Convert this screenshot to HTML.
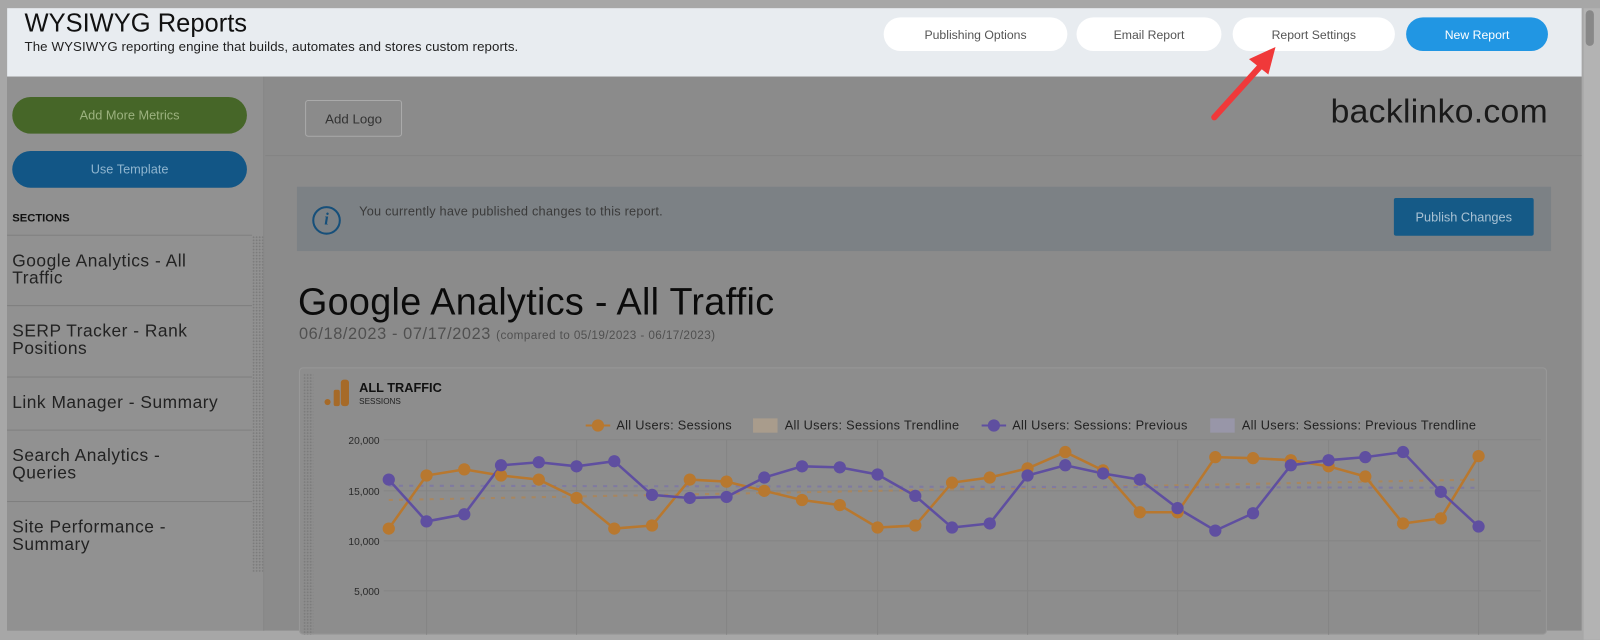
<!DOCTYPE html>
<html><head><meta charset="utf-8"><style>
*{margin:0;padding:0;box-sizing:border-box}
html,body{width:1600px;height:640px;overflow:hidden;background:#a7a7a7;font-family:"Liberation Sans",sans-serif}
#s{position:absolute;left:0;top:0;width:1568px;height:627px;transform:scale(1.020408);transform-origin:0 0}
.a{position:absolute}
.btn{position:absolute;top:17px;height:33px;border-radius:17px;background:#fff;color:#555;font-size:12px;display:flex;align-items:center;justify-content:center}
.sec{position:absolute;left:12px;font-size:17px;color:#222;line-height:17px;letter-spacing:0.5px}
.hr{position:absolute;left:7px;width:240px;height:1px;background:#7f7f7f}
</style></head><body><div id="s">
<div class="a" style="left:7px;top:75px;width:1543px;height:543px;background:#8b8b8b"></div>
<div class="a" style="left:7px;top:75px;width:252px;height:543px;background:#919191;border-right:1px solid #858585"></div>
<div class="a" style="left:1552px;top:8px;width:16px;height:619px;background:#b3b3b3"></div>
<div class="a" style="left:1554px;top:10px;width:8px;height:35px;background:#888;border-radius:4px"></div>
<div class="a" style="left:7px;top:8px;width:1543px;height:67px;background:#e8ecf0"></div>
<div class="a" style="left:24px;top:9px;font-size:25px;color:#111">WYSIWYG Reports</div>
<div class="a" style="left:24px;top:38px;font-size:13px;color:#222;letter-spacing:0.1px">The WYSIWYG reporting engine that builds, automates and stores custom reports.</div>
<div class="btn" style="left:866px;width:180px">Publishing Options</div>
<div class="btn" style="left:1055px;width:142px">Email Report</div>
<div class="btn" style="left:1208px;width:159px">Report Settings</div>
<div class="btn" style="left:1378px;width:139px;background:#2196e3;color:#fff">New Report</div>

<div class="a" style="left:12px;top:95px;width:230px;height:36px;border-radius:18px;background:#466628;color:#9cb27f;font-size:12.5px;display:flex;align-items:center;justify-content:center">Add More Metrics</div>
<div class="a" style="left:12px;top:148px;width:230px;height:36px;border-radius:18px;background:#125686;color:#8fb5cf;font-size:12.5px;display:flex;align-items:center;justify-content:center">Use Template</div>
<div class="a" style="left:12px;top:208px;font-size:11px;font-weight:bold;color:#111">SECTIONS</div>
<div class="hr" style="top:230px"></div><div class="hr" style="top:299px"></div><div class="hr" style="top:369px"></div><div class="hr" style="top:421px"></div><div class="hr" style="top:491px"></div>
<div class="a" style="left:247px;top:231px;width:11px;height:330px;background-image:radial-gradient(#7c7c7c 0.8px,transparent 1px);background-size:3px 3px"></div>
<div class="sec" style="top:247px">Google Analytics - All<br>Traffic</div>
<div class="sec" style="top:316px">SERP Tracker - Rank<br>Positions</div>
<div class="sec" style="top:386px">Link Manager - Summary</div>
<div class="sec" style="top:438px">Search Analytics -<br>Queries</div>
<div class="sec" style="top:508px">Site Performance -<br>Summary</div>

<div class="a" style="left:299px;top:98px;width:95px;height:36px;border:1px solid #aaa;border-radius:3px;color:#333;font-size:13px;display:flex;align-items:center;justify-content:center">Add Logo</div>
<div class="a" style="right:51px;top:90px;font-size:33px;color:#1a1a1a;letter-spacing:0.3px">backlinko.com</div>
<div class="a" style="left:260px;top:152px;width:1290px;height:1px;background:#838383"></div>
<div class="a" style="left:291px;top:183px;width:1229px;height:63px;background:#7c8185"></div>
<div class="a" style="left:306px;top:202px;width:28px;height:28px;border:2px solid #164f7a;border-radius:50%;color:#164f7a;font:italic bold 16px 'Liberation Serif',serif;display:flex;align-items:center;justify-content:center">i</div>
<div class="a" style="left:352px;top:200px;font-size:12.5px;color:#3a3a3a;letter-spacing:0.2px">You currently have published changes to this report.</div>
<div class="a" style="left:1366px;top:194px;width:137px;height:37px;background:#155a87;border-radius:2px;color:#a9c2d4;font-size:12.5px;display:flex;align-items:center;justify-content:center">Publish Changes</div>
<div class="a" style="left:292px;top:275px;font-size:37px;color:#0b0b0b;letter-spacing:0.3px">Google Analytics - All Traffic</div>
<div class="a" style="left:293px;top:319px;font-size:16px;color:#505050;letter-spacing:0.6px">06/18/2023 - 07/17/2023 <span style="font-size:11.5px;letter-spacing:0.4px">(compared to 05/19/2023 - 06/17/2023)</span></div>

<div class="a" style="left:293px;top:360px;width:1223px;height:262px;background:#8d8d8d;border:1px solid #989898;border-radius:4px"></div>
<div class="a" style="left:297px;top:366px;width:10px;height:256px;background-image:radial-gradient(#7c7c7c 0.8px,transparent 1px);background-size:3px 3px"></div>
<svg class="a" style="left:0;top:0" width="1568" height="627">
<rect x="334" y="372" width="8" height="26" rx="3" fill="#a66a28"/><rect x="327" y="382" width="6" height="16" rx="2" fill="#a66a28"/><circle cx="321" cy="394" r="3" fill="#a66a28"/>
<text x="352" y="384" font-family="Liberation Sans" font-weight="bold" font-size="12.5" fill="#111">ALL TRAFFIC</text>
<text x="352" y="396" font-family="Liberation Sans" font-size="8" fill="#222">SESSIONS</text>
<g font-family="Liberation Sans" font-size="12.5" fill="#222" letter-spacing="0.3">
<line x1="574" y1="417" x2="598" y2="417" stroke="#b8782f" stroke-width="2"/><circle cx="586" cy="417" r="6" fill="#b8782f"/><text x="604" y="421">All Users: Sessions</text>
<rect x="738" y="410" width="24" height="14" fill="#a99c8c"/><text x="769" y="421">All Users: Sessions Trendline</text>
<line x1="962" y1="417" x2="986" y2="417" stroke="#5f4fa0" stroke-width="2"/><circle cx="974" cy="417" r="6" fill="#5f4fa0"/><text x="992" y="421">All Users: Sessions: Previous</text>
<rect x="1186" y="410" width="24" height="14" fill="#9896a8"/><text x="1217" y="421">All Users: Sessions: Previous Trendline</text>
</g>
<g font-family="Liberation Sans" font-size="10" fill="#2a2a2a" text-anchor="end">
<text x="372" y="435">20,000</text><text x="372" y="485">15,000</text><text x="372" y="534">10,000</text><text x="372" y="583">5,000</text></g>
<g stroke="#858585" stroke-width="1"><line x1="376" y1="431" x2="1510" y2="431"/><line x1="376" y1="481" x2="1510" y2="481"/><line x1="376" y1="530" x2="1510" y2="530"/><line x1="376" y1="579" x2="1510" y2="579"/>
<line x1="418" y1="431" x2="418" y2="622"/><line x1="565" y1="431" x2="565" y2="622"/><line x1="712" y1="431" x2="712" y2="622"/><line x1="860" y1="431" x2="860" y2="622"/><line x1="1007" y1="431" x2="1007" y2="622"/><line x1="1154" y1="431" x2="1154" y2="622"/><line x1="1302" y1="431" x2="1302" y2="622"/><line x1="1449" y1="431" x2="1449" y2="622"/></g>
<line x1="381" y1="490" x2="1449" y2="470" stroke="#a8865f" stroke-width="2" stroke-dasharray="4 6"/>
<line x1="381" y1="476" x2="1449" y2="478" stroke="#7f7aa0" stroke-width="2" stroke-dasharray="4 6"/>
<polyline fill="none" stroke="#b8782f" stroke-width="2.5" points="381,518 418,466 455,460 491,466 528,470 565,488 602,518 639,515 676,470 712,472 749,481 786,490 823,495 860,517 897,515 933,473 970,468 1007,459 1044,443 1081,461 1117,502 1154,502 1191,448 1228,449 1265,451 1302,457 1338,467 1375,513 1412,508 1449,447"/>
<polyline fill="none" stroke="#5f4fa0" stroke-width="2.5" points="381,470 418,511 455,504 491,456 528,453 565,457 602,452 639,485 676,488 712,487 749,468 786,457 823,458 860,465 897,486 933,517 970,513 1007,466 1044,456 1081,464 1117,470 1154,498 1191,520 1228,503 1265,456 1302,451 1338,448 1375,443 1412,482 1449,516"/>
<g fill="#b8782f"><circle cx="381" cy="518" r="6"/><circle cx="418" cy="466" r="6"/><circle cx="455" cy="460" r="6"/><circle cx="491" cy="466" r="6"/><circle cx="528" cy="470" r="6"/><circle cx="565" cy="488" r="6"/><circle cx="602" cy="518" r="6"/><circle cx="639" cy="515" r="6"/><circle cx="676" cy="470" r="6"/><circle cx="712" cy="472" r="6"/><circle cx="749" cy="481" r="6"/><circle cx="786" cy="490" r="6"/><circle cx="823" cy="495" r="6"/><circle cx="860" cy="517" r="6"/><circle cx="897" cy="515" r="6"/><circle cx="933" cy="473" r="6"/><circle cx="970" cy="468" r="6"/><circle cx="1007" cy="459" r="6"/><circle cx="1044" cy="443" r="6"/><circle cx="1081" cy="461" r="6"/><circle cx="1117" cy="502" r="6"/><circle cx="1154" cy="502" r="6"/><circle cx="1191" cy="448" r="6"/><circle cx="1228" cy="449" r="6"/><circle cx="1265" cy="451" r="6"/><circle cx="1302" cy="457" r="6"/><circle cx="1338" cy="467" r="6"/><circle cx="1375" cy="513" r="6"/><circle cx="1412" cy="508" r="6"/><circle cx="1449" cy="447" r="6"/></g>
<g fill="#5f4fa0"><circle cx="381" cy="470" r="6"/><circle cx="418" cy="511" r="6"/><circle cx="455" cy="504" r="6"/><circle cx="491" cy="456" r="6"/><circle cx="528" cy="453" r="6"/><circle cx="565" cy="457" r="6"/><circle cx="602" cy="452" r="6"/><circle cx="639" cy="485" r="6"/><circle cx="676" cy="488" r="6"/><circle cx="712" cy="487" r="6"/><circle cx="749" cy="468" r="6"/><circle cx="786" cy="457" r="6"/><circle cx="823" cy="458" r="6"/><circle cx="860" cy="465" r="6"/><circle cx="897" cy="486" r="6"/><circle cx="933" cy="517" r="6"/><circle cx="970" cy="513" r="6"/><circle cx="1007" cy="466" r="6"/><circle cx="1044" cy="456" r="6"/><circle cx="1081" cy="464" r="6"/><circle cx="1117" cy="470" r="6"/><circle cx="1154" cy="498" r="6"/><circle cx="1191" cy="520" r="6"/><circle cx="1228" cy="503" r="6"/><circle cx="1265" cy="456" r="6"/><circle cx="1302" cy="451" r="6"/><circle cx="1338" cy="448" r="6"/><circle cx="1375" cy="443" r="6"/><circle cx="1412" cy="482" r="6"/><circle cx="1449" cy="516" r="6"/></g>
<line x1="1190" y1="115" x2="1236" y2="64" stroke="#f0393a" stroke-width="6" stroke-linecap="round"/>
<polygon points="1250,46 1224,58 1243,73" fill="#f0393a"/>
</svg>
</div></body></html>
